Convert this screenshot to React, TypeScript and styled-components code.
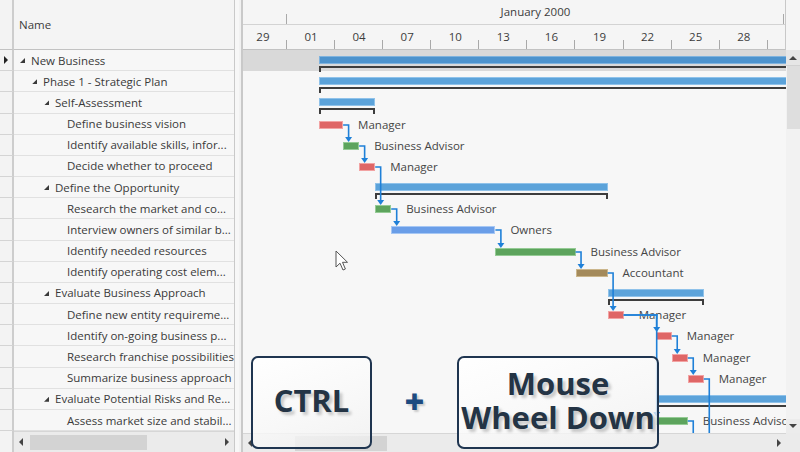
import React from "react";
import styled, { createGlobalStyle } from "styled-components";

const FONT = `"Open Sans", "Noto Sans", "DejaVu Sans", sans-serif`;

const GlobalStyle = createGlobalStyle`
  html, body { margin: 0; padding: 0; background: #f7f7f7; }
  body { font-family: ${FONT}; color: #3c3c3c; }
  * { box-sizing: border-box; }
`;

const ROW_H = 21.18;
const DAY_W = 16.03;
const X0 = 44; // canvas x of Jan 1
const dx = (day: number) => X0 + (day - 1) * DAY_W;

type Kind = "summary" | "red" | "green" | "blue" | "brown";
interface Task {
  name: string;
  level: number;
  group?: boolean;
  start: number;
  end: number;
  kind: Kind;
  label?: string;
}

const tasks: Task[] = [
  { name: "New Business", level: 0, group: true, start: 3, end: 40, kind: "summary" },
  { name: "Phase 1 - Strategic Plan", level: 1, group: true, start: 3, end: 40, kind: "summary" },
  { name: "Self-Assessment", level: 2, group: true, start: 3, end: 6.5, kind: "summary" },
  { name: "Define business vision", level: 3, start: 3, end: 4.5, kind: "red", label: "Manager" },
  { name: "Identify available skills, infor...", level: 3, start: 4.5, end: 5.5, kind: "green", label: "Business Advisor" },
  { name: "Decide whether to proceed", level: 3, start: 5.5, end: 6.5, kind: "red", label: "Manager" },
  { name: "Define the Opportunity", level: 2, group: true, start: 6.5, end: 21, kind: "summary" },
  { name: "Research the market and co...", level: 3, start: 6.5, end: 7.5, kind: "green", label: "Business Advisor" },
  { name: "Interview owners of similar b...", level: 3, start: 7.5, end: 14, kind: "blue", label: "Owners" },
  { name: "Identify needed resources", level: 3, start: 14, end: 19, kind: "green", label: "Business Advisor" },
  { name: "Identify operating cost elem...", level: 3, start: 19, end: 21, kind: "brown", label: "Accountant" },
  { name: "Evaluate Business Approach", level: 2, group: true, start: 21, end: 27, kind: "summary" },
  { name: "Define new entity requireme...", level: 3, start: 21, end: 22, kind: "red", label: "Manager" },
  { name: "Identify on-going business p...", level: 3, start: 24, end: 25, kind: "red", label: "Manager" },
  { name: "Research franchise possibilities", level: 3, start: 25, end: 26, kind: "red", label: "Manager" },
  { name: "Summarize business approach", level: 3, start: 26, end: 27, kind: "red", label: "Manager" },
  { name: "Evaluate Potential Risks and Re...", level: 2, group: true, start: 24, end: 40, kind: "summary" },
  { name: "Assess market size and stabil...", level: 3, start: 24, end: 26, kind: "green", label: "Business Advisor" },
];

interface Link { from: number; to: number; turn?: number }
const links: Link[] = [
  { from: 3, to: 4 },
  { from: 4, to: 5 },
  { from: 5, to: 7 },
  { from: 7, to: 8 },
  { from: 8, to: 9 },
  { from: 9, to: 10 },
  { from: 10, to: 12 },
  { from: 12, to: 13, turn: dx(24) + 1 },
  { from: 12, to: 17, turn: dx(24) + 1 },
  { from: 13, to: 14 },
  { from: 14, to: 15 },
  { from: 15, to: 18 },
  { from: 17, to: 18 },
];

const dayLabels = ["29", "01", "04", "07", "10", "13", "16", "19", "22", "25", "28", ""];

const barColors: Record<Exclude<Kind, "summary">, { fill: string; edge: string }> = {
  red: { fill: "#df6666", edge: "#f2a3a3" },
  green: { fill: "#5da45d", edge: "#95cb95" },
  blue: { fill: "#6a9ee8", edge: "#a6c7f4" },
  brown: { fill: "#a48a5b", edge: "#cbb68c" },
};

/* ---------- layout ---------- */

const Root = styled.div`
  position: relative;
  width: 800px;
  height: 452px;
  overflow: hidden;
  display: flex;
  background: #f7f7f7;
  font-family: ${FONT};
  font-size: 11.5px;
  color: #3c3c3c;
`;

const LeftPane = styled.div`
  width: 235px;
  flex: none;
  display: flex;
  flex-direction: column;
  border-right: 1px solid #c9c9c9;
`;

const GridRow = styled.div<{ $h: number }>`
  display: flex;
  height: ${(p) => p.$h}px;
  flex: none;
`;

const GridBody = styled.div`
  flex: 1;
  overflow: hidden;
  display: flex;
  flex-direction: column;
`;

const Gutter = styled.div<{ $head?: boolean; $plain?: boolean }>`
  width: 14px;
  flex: none;
  border-right: 2px solid #cdcdcd;
  border-bottom: ${(p) => (p.$plain ? "none" : `1px solid ${p.$head ? "#c2c2c2" : "#d4d4d4"}`)};
  background: #f3f3f3;
  display: flex;
  align-items: center;
  justify-content: center;
`;

const RowIndicator = styled.span`
  width: 0;
  height: 0;
  border-left: 4px solid #222;
  border-top: 4px solid transparent;
  border-bottom: 4px solid transparent;
`;

const NameHeader = styled.div`
  flex: 1;
  display: flex;
  align-items: center;
  padding-left: 5px;
  padding-bottom: 1px;
  background: #f4f4f4;
  border-bottom: 1px solid #c2c2c2;
  color: #3c3c3c;
`;

const NameCell = styled.div<{ $level: number }>`
  flex: 1;
  min-width: 0;
  display: flex;
  align-items: center;
  gap: 6px;
  padding-left: ${(p) => 6 + p.$level * 12}px;
  border-bottom: 1px solid #e1e1e1;
  background: #f7f7f7;
  white-space: nowrap;
  overflow: hidden;
  color: #3a3a3a;
`;

const Toggle = styled.span<{ $show: boolean }>`
  width: 5px;
  height: 5px;
  flex: none;
  margin-top: 1px;
  background: ${(p) => (p.$show ? "#3a3a3a" : "transparent")};
  clip-path: polygon(100% 0, 100% 100%, 0 100%);
`;

const Splitter = styled.div`
  width: 8px;
  flex: none;
  background: #f1f1f1;
  border-right: 2px solid #c9c9c9;
  box-shadow: inset 4px 0 0 #f7f7f7;
`;

/* ---------- scrollbars ---------- */

const HScroll = styled.div`
  flex: 1;
  display: flex;
  align-items: stretch;
  background: #ebebeb;
  border-top: 1px solid #d6d6d6;
`;

const ScrollBtn = styled.div`
  width: 14px;
  flex: none;
  display: flex;
  align-items: center;
  justify-content: center;
`;

const Arrow = styled.span<{ $dir: "left" | "right" | "up" | "down" }>`
  width: 0;
  height: 0;
  ${(p) =>
    p.$dir === "left"
      ? "border-right: 4px solid #444; border-top: 4px solid transparent; border-bottom: 4px solid transparent;"
      : p.$dir === "right"
      ? "border-left: 4px solid #444; border-top: 4px solid transparent; border-bottom: 4px solid transparent;"
      : p.$dir === "up"
      ? "border-bottom: 4px solid #444; border-left: 4px solid transparent; border-right: 4px solid transparent;"
      : "border-top: 4px solid #444; border-left: 4px solid transparent; border-right: 4px solid transparent;"}
`;

const HTrack = styled.div`
  flex: 1;
  display: flex;
  align-items: center;
`;

const HThumb = styled.div<{ $offset: number; $w: number }>`
  margin-left: ${(p) => p.$offset}px;
  width: ${(p) => p.$w}px;
  height: 15px;
  background: #d3d3d3;
`;

const VScroll = styled.div`
  width: 14px;
  flex: none;
  display: flex;
  flex-direction: column;
  background: #f2f2f2;
`;

const VBtn = styled.div<{ $h: number }>`
  height: ${(p) => p.$h}px;
  flex: none;
  display: flex;
  align-items: center;
  justify-content: center;
  background: #e6e6e6;
  border-bottom: 1px solid #d2d2d2;
`;

const VThumb = styled.div`
  height: 63px;
  flex: none;
  margin-left: 1px;
  background: #dedede;
`;

const VTrack = styled.div`
  flex: 1;
`;

const VBtnBottom = styled.div`
  height: 14px;
  flex: none;
  display: flex;
  align-items: center;
  justify-content: center;
  background: #ececec;
`;

/* ---------- chart ---------- */

const ChartPane = styled.div`
  flex: 1;
  display: flex;
  flex-direction: column;
  min-width: 0;
`;

const ChartHeader = styled.div`
  display: flex;
  height: 50px;
  flex: none;
  background: #f5f5f5;
`;

const TimeScale = styled.div`
  width: 543px;
  flex: none;
  overflow: hidden;
  display: flex;
  flex-direction: column;
  border-right: 1px solid #c8c8c8;
  border-bottom: 1px solid #c2c2c2;
  background: #f5f5f5;
`;

const MonthBand = styled.div`
  height: 25px;
  flex: none;
  display: flex;
  border-bottom: 1px solid #d3d3d3;
`;

const MonthCell = styled.div<{ $w: number }>`
  width: ${(p) => p.$w}px;
  flex: none;
  position: relative;
  display: flex;
  align-items: center;
  justify-content: center;
  padding-bottom: 1px;
  white-space: nowrap;
  color: #3c3c3c;
  &::after {
    content: "";
    position: absolute;
    right: 0;
    bottom: 0;
    width: 1px;
    height: 10px;
    background: #a9a9a9;
  }
`;

const DayBand = styled.div`
  flex: 1;
  display: flex;
  margin-left: -4.1px;
`;

const DayCell = styled.div`
  width: ${DAY_W * 3}px;
  flex: none;
  position: relative;
  display: flex;
  align-items: center;
  justify-content: center;
  padding-bottom: 1px;
  color: #3c3c3c;
  &::after {
    content: "";
    position: absolute;
    right: 0;
    bottom: 0;
    width: 1px;
    height: 9px;
    background: #a9a9a9;
  }
`;

const HeaderCorner = styled.div`
  flex: 1;
  background: #f5f5f5;
`;

const ChartBody = styled.div`
  flex: 1;
  display: flex;
  min-height: 0;
`;

const Canvas = styled.div`
  position: relative;
  width: 543px;
  flex: none;
  overflow: hidden;
  background: #f7f7f7;
  display: flex;
  flex-direction: column;
`;

const ChartRow = styled.div<{ $selected?: boolean }>`
  height: ${ROW_H}px;
  flex: none;
  background: ${(p) => (p.$selected ? "#d9d9d9" : "transparent")};
`;

const SummaryBar = styled.div<{ $selected?: boolean }>`
  position: absolute;
  height: 8px;
  background: ${(p) => (p.$selected ? "#4d93cd" : "#5ca3da")};
  border: 1px solid ${(p) => (p.$selected ? "#7fb3de" : "#8fc2ea")};
  &::after {
    content: "";
    position: absolute;
    left: -1px;
    right: -1px;
    top: 9px;
    height: 4px;
    border: 2px solid #3d3d3d;
    border-bottom: none;
  }
`;

const TaskBar = styled.div<{ $fill: string; $edge: string }>`
  position: absolute;
  height: 8px;
  background: ${(p) => p.$fill};
  border: 1px solid ${(p) => p.$edge};
`;

const TaskLabel = styled.div`
  position: absolute;
  line-height: 15px;
  white-space: nowrap;
  color: #454545;
`;

const LinkLayer = styled.svg`
  position: absolute;
  left: 0;
  top: 0;
  pointer-events: none;
`;

const ChartFooter = styled.div`
  height: 19px;
  flex: none;
  display: flex;
`;

const ChartHScroll = styled.div`
  width: 543px;
  flex: none;
  display: flex;
  background: #ebebeb;
  border-top: 1px solid #d6d6d6;
`;

const FooterCorner = styled.div`
  flex: 1;
  background: #ebebeb;
`;

/* ---------- overlay ---------- */

const Overlay = styled.div`
  position: absolute;
  left: 251px;
  top: 356px;
  display: flex;
  align-items: center;
`;

const KeyCap = styled.div<{ $w: number }>`
  width: ${(p) => p.$w}px;
  height: 93px;
  border: 2px solid #1f3550;
  border-radius: 7px;
  background: linear-gradient(160deg, rgba(255, 255, 255, 0.95) 0%, rgba(248, 248, 248, 0.82) 60%, rgba(240, 240, 240, 0.7) 100%);
  display: flex;
  align-items: center;
  justify-content: center;
  text-align: center;
  font-family: ${FONT};
  font-weight: 700;
  font-size: 31px;
  line-height: 34px;
  color: #243445;
  text-shadow: 3px 3px 3px rgba(0, 0, 0, 0.2);
  padding-bottom: 5px;
`;

const PlusSign = styled.div`
  width: 85px;
  text-align: center;
  font-family: ${FONT};
  font-weight: 800;
  font-size: 34px;
  color: #1d4b80;
  padding-bottom: 3px;
  text-shadow: 2px 2px 2px rgba(0, 0, 0, 0.18);
`;

const Cursor = styled.svg`
  position: absolute;
  left: 335px;
  top: 250px;
`;

export default function App() {
  const canvasH = 383;
  return (
    <>
      <GlobalStyle />
      <Root>
        <LeftPane>
          <GridRow $h={50}>
            <Gutter $head />
            <NameHeader>Name</NameHeader>
          </GridRow>
          <GridBody>
            {tasks.map((t, i) => (
              <GridRow $h={ROW_H} key={i}>
                <Gutter>{i === 0 && <RowIndicator />}</Gutter>
                <NameCell $level={t.level}>
                  <Toggle $show={!!t.group} />
                  {t.name}
                </NameCell>
              </GridRow>
            ))}
            <GridRow $h={ROW_H}>
              <Gutter />
              <NameCell $level={3} />
            </GridRow>
          </GridBody>
          <GridRow $h={21}>
            <Gutter $plain />
            <HScroll>
              <ScrollBtn>
                <Arrow $dir="left" />
              </ScrollBtn>
              <HTrack>
                <HThumb $offset={2} $w={117} />
              </HTrack>
              <ScrollBtn>
                <Arrow $dir="right" />
              </ScrollBtn>
            </HScroll>
          </GridRow>
        </LeftPane>
        <Splitter />
        <ChartPane>
          <ChartHeader>
            <TimeScale>
              <MonthBand>
                <MonthCell $w={X0} />
                <MonthCell $w={DAY_W * 31}>January 2000</MonthCell>
              </MonthBand>
              <DayBand>
                {dayLabels.map((d, k) => (
                  <DayCell key={k}>{d}</DayCell>
                ))}
              </DayBand>
            </TimeScale>
            <HeaderCorner />
          </ChartHeader>
          <ChartBody>
            <Canvas>
              {tasks.map((_, i) => (
                <ChartRow key={i} $selected={i === 0} />
              ))}
              {tasks.map((t, i) => {
                const left = dx(t.start);
                const width = dx(t.end) - left;
                const top = Math.round(i * ROW_H);
                if (t.kind === "summary") {
                  return (
                    <SummaryBar
                      key={"b" + i}
                      $selected={i === 0}
                      style={{ left, width, top: top + 6 }}
                    />
                  );
                }
                const c = barColors[t.kind];
                return (
                  <React.Fragment key={"b" + i}>
                    <TaskBar $fill={c.fill} $edge={c.edge} style={{ left, width, top: top + 7 }} />
                    <TaskLabel style={{ left: left + width + 15, top: top + 2.5 }}>{t.label}</TaskLabel>
                  </React.Fragment>
                );
              })}
              <LinkLayer width={543} height={canvasH} viewBox={`0 0 543 ${canvasH}`}>
                {links.map((l, k) => {
                  const src = tasks[l.from];
                  const x1 = dx(src.end);
                  const y1 = Math.round(l.from * ROW_H) + 11;
                  const tx = l.turn ?? x1 + 5.5;
                  const ty = Math.round(l.to * ROW_H) + 7;
                  return (
                    <g key={k}>
                      <path
                        d={`M${x1} ${y1} H${tx} V${ty - 4}`}
                        fill="none"
                        stroke="#1f80d8"
                        strokeWidth={1.6}
                      />
                      <polygon
                        points={`${tx - 3.5},${ty - 5} ${tx + 3.5},${ty - 5} ${tx},${ty}`}
                        fill="#1f80d8"
                      />
                    </g>
                  );
                })}
              </LinkLayer>
            </Canvas>
            <VScroll>
              <VBtn $h={16}>
                <Arrow $dir="up" />
              </VBtn>
              <VThumb />
              <VTrack />
              <VBtnBottom>
                <Arrow $dir="down" />
              </VBtnBottom>
            </VScroll>
          </ChartBody>
          <ChartFooter>
            <ChartHScroll>
              <ScrollBtn>
                <Arrow $dir="left" />
              </ScrollBtn>
              <HTrack>
                <HThumb $offset={38} $w={92} />
              </HTrack>
              <ScrollBtn>
                <Arrow $dir="right" />
              </ScrollBtn>
            </ChartHScroll>
            <FooterCorner />
          </ChartFooter>
        </ChartPane>

        <Cursor width="14" height="22" viewBox="0 0 14 22">
          <path
            d="M1 1 L1 17 L5 13.2 L8 20 L10.4 19 L7.5 12.3 L12.5 12.3 Z"
            fill="#ffffff"
            stroke="#555"
            strokeWidth="1"
            strokeLinejoin="round"
          />
        </Cursor>

        <Overlay>
          <KeyCap $w={121}>CTRL</KeyCap>
          <PlusSign>+</PlusSign>
          <KeyCap $w={202}>
            Mouse
            <br />
            Wheel Down
          </KeyCap>
        </Overlay>
      </Root>
    </>
  );
}
